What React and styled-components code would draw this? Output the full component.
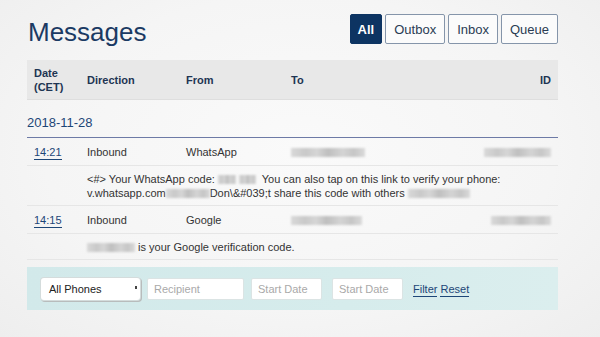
import React from "react";
import styled, { createGlobalStyle } from "styled-components";

const GlobalStyle = createGlobalStyle`
  html, body {
    margin: 0;
    padding: 0;
  }
  body {
    width: 600px;
    height: 337px;
    overflow: hidden;
    background: radial-gradient(ellipse at 50% 45%, #fafafa 0%, #f5f5f5 60%, #eeeeee 100%);
    font-family: "Liberation Sans", Arial, sans-serif;
    color: #333;
  }
`;

const Page = styled.div`
  width: 531px;
  margin-left: 27px;
  padding-top: 14px;
`;

const TopBar = styled.div`
  display: flex;
  justify-content: space-between;
  align-items: flex-start;
  height: 30px;
`;

const Title = styled.h1`
  margin: 3px 0 0 1px;
  font-size: 26px;
  line-height: 30px;
  font-weight: 400;
  color: #1b3a63;
`;

const Tabs = styled.div`
  display: flex;
  gap: 3px;
`;

const Tab = styled.button`
  height: 30px;
  padding: 0 ${(p) => (p.active ? "7px" : "8px")};
  border: 1px solid ${(p) => (p.active ? "#0d3462" : "#8595aa")};
  border-radius: 2px;
  background: ${(p) => (p.active ? "#0d3462" : "#fbfbfb")};
  color: ${(p) => (p.active ? "#fff" : "#2a3c53")};
  font-family: "Liberation Sans", Arial, sans-serif;
  font-size: 13px;
  font-weight: ${(p) => (p.active ? 700 : 400)};
  cursor: pointer;
`;

const Grid = styled.div`
  display: grid;
  grid-template-columns: 53px 99px 105px 1fr auto;
  align-items: center;
`;

const HeadRow = styled(Grid)`
  margin-top: 16px;
  height: 40px;
  background: #e8e8e8;
  border-bottom: 1px solid #dedede;
  box-sizing: border-box;
`;

const HeadCell = styled.div`
  padding: 0 7px;
  font-size: 11px;
  line-height: 14px;
  font-weight: 700;
  color: #1e3553;
  text-align: ${(p) => (p.right ? "right" : "left")};
`;

const DayHeading = styled.h2`
  margin: 15px 0 0;
  padding-bottom: 6px;
  font-size: 13px;
  line-height: 16px;
  font-weight: 400;
  color: #1d4677;
  border-bottom: 1px solid #6d7aa6;
`;

const Row = styled(Grid)`
  padding: 7px 0 6px;
  border-bottom: 1px solid #e6e6e6;
`;

const Cell = styled.div`
  padding: 0 7px;
  font-size: 11px;
  line-height: 14px;
  color: #333;
  text-align: ${(p) => (p.right ? "right" : "left")};
`;

const TimeLink = styled.a`
  color: #1d4677;
  text-decoration: none;
  border-bottom: 1px solid #1d4677;
  padding-bottom: 1px;
`;

const Message = styled.div`
  padding: 6px 7px 5px 60px;
  font-size: 11px;
  line-height: 14px;
  color: #333;
  border-bottom: 1px solid #e6e6e6;
`;

const Blur = styled.span`
  display: inline-block;
  width: ${(p) => p.w}px;
  height: 9px;
  margin: 0 ${(p) => p.gap || 0}px;
  vertical-align: -1px;
  background: linear-gradient(
    90deg,
    #d9d9d9 0%,
    #c9c9c9 20%,
    #d6d6d6 35%,
    #bfbfbf 50%,
    #d4d4d4 70%,
    #c6c6c6 85%,
    #dadada 100%
  );
  filter: blur(1.2px);
`;

const FilterBar = styled.form`
  margin-top: 7px;
  height: 43px;
  box-sizing: border-box;
  padding: 11px 14px 10px;
  display: flex;
  align-items: center;
  background: linear-gradient(90deg, #d2e9ea 0%, #d6ecec 60%, #dbeeee 100%);
`;

const SelectBox = styled.div`
  position: relative;
  width: 99px;
  height: 22px;
  box-sizing: border-box;
  padding-left: 8px;
  display: flex;
  align-items: center;
  background: #fff;
  border-radius: 3px;
  box-shadow: 0 0 0 1px #d4dcdc, 1px 1px 0 1px #b8bcbc;
  font-size: 11px;
  color: #222;
`;

const SelectArrow = styled.span`
  position: absolute;
  right: 3px;
  top: 8px;
  width: 2px;
  height: 3px;
  background: #444;
`;

const Input = styled.input`
  width: ${(p) => p.w}px;
  height: 22px;
  box-sizing: border-box;
  margin-left: ${(p) => p.gap}px;
  padding: 0 6px;
  border: 1px solid #dbe4e4;
  border-radius: 2px;
  background: #fff;
  font-family: "Liberation Sans", Arial, sans-serif;
  font-size: 11px;
  color: #333;
  &::placeholder {
    color: #a9a9a9;
  }
`;

const BarLink = styled.a`
  margin-left: ${(p) => p.gap}px;
  font-size: 11px;
  line-height: 14px;
  color: #1d4677;
  text-decoration: none;
  border-bottom: 1px solid #1d4677;
`;

const entries = [
  {
    time: "14:21",
    direction: "Inbound",
    from: "WhatsApp",
    to: 74,
    id: 67,
    text: (
      <>
        &lt;#&gt; Your WhatsApp code: <Blur w={18} />
        <Blur w={17} gap={3} /> You can also tap on this link to verify your phone:
        <br />
        v.whatsapp.com<Blur w={44} />Don\&amp;#039;t share this code with others{" "}
        <Blur w={62} />
      </>
    ),
  },
  {
    time: "14:15",
    direction: "Inbound",
    from: "Google",
    to: 71,
    id: 60,
    text: (
      <>
        <Blur w={48} /> is your Google verification code.
      </>
    ),
  },
];

export default function App() {
  return (
    <Page>
      <GlobalStyle />
      <TopBar>
        <Title>Messages</Title>
        <Tabs>
          <Tab active>All</Tab>
          <Tab>Outbox</Tab>
          <Tab>Inbox</Tab>
          <Tab>Queue</Tab>
        </Tabs>
      </TopBar>

      <HeadRow>
        <HeadCell>
          Date
          <br />
          (CET)
        </HeadCell>
        <HeadCell>Direction</HeadCell>
        <HeadCell>From</HeadCell>
        <HeadCell>To</HeadCell>
        <HeadCell right>ID</HeadCell>
      </HeadRow>

      <DayHeading>2018-11-28</DayHeading>

      {entries.map((e) => (
        <React.Fragment key={e.time}>
          <Row>
            <Cell>
              <TimeLink href="#">{e.time}</TimeLink>
            </Cell>
            <Cell>{e.direction}</Cell>
            <Cell>{e.from}</Cell>
            <Cell>
              <Blur w={e.to} />
            </Cell>
            <Cell right>
              <Blur w={e.id} />
            </Cell>
          </Row>
          <Message>{e.text}</Message>
        </React.Fragment>
      ))}

      <FilterBar>
        <SelectBox>
          All Phones
          <SelectArrow />
        </SelectBox>
        <Input w={97} gap={7} placeholder="Recipient" />
        <Input w={71} gap={7} placeholder="Start Date" />
        <Input w={71} gap={10} placeholder="Start Date" />
        <BarLink href="#" gap={10}>
          Filter
        </BarLink>
        <BarLink href="#" gap={3}>
          Reset
        </BarLink>
      </FilterBar>
    </Page>
  );
}
